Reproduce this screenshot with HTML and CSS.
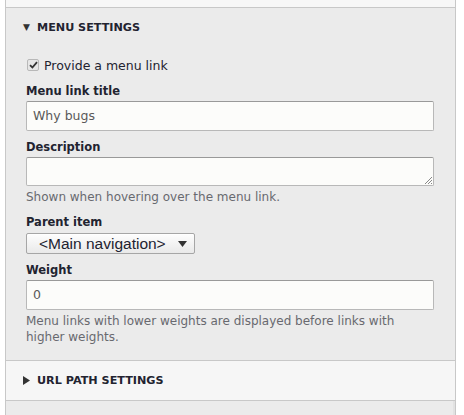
FILE: index.html
```html
<!DOCTYPE html>
<html>
<head>
<meta charset="utf-8">
<link rel="stylesheet" href="styles.css">
</head>
<body>
<div class="meta">
  <div class="topbar"></div>
  <div class="details open">
    <div class="summary"><span class="tri">&#9660;</span>MENU SETTINGS</div>
    <div class="body">
      <div class="check-row">
        <span class="checkbox"><svg width="9" height="8" viewBox="0 0 9 8"><path d="M1 4.2 L3.4 6.5 L8 1.2" fill="none" stroke="#333" stroke-width="1.8"/></svg></span>
        <span class="check-label">Provide a menu link</span>
      </div>
      <div class="item">
        <div class="label">Menu link title</div>
        <div class="input">Why bugs</div>
      </div>
      <div class="item">
        <div class="label">Description</div>
        <div class="input textarea"><svg class="grip" width="8" height="8" viewBox="0 0 8 8"><path d="M1 8 L8 1 M4 8 L8 4 M7 8 L8 7" stroke="#888" stroke-width="1"/></svg></div>
        <div class="help">Shown when hovering over the menu link.</div>
      </div>
      <div class="item after-help">
        <div class="label">Parent item</div>
        <div class="select"><span>&lt;Main navigation&gt;</span><svg class="arrow" width="9" height="6" viewBox="0 0 9 6"><path d="M0 0 H9 L4.5 6 Z" fill="#333"/></svg></div>
      </div>
      <div class="item">
        <div class="label">Weight</div>
        <div class="input">0</div>
        <div class="help">Menu links with lower weights are displayed before links with higher weights.</div>
      </div>
    </div>
  </div>
  <div class="details closed">
    <div class="summary"><span class="tri"><svg width="7" height="9" viewBox="0 0 7 9"><path d="M0 0 L7 4.5 L0 9 Z" fill="#333"/></svg></span>URL PATH SETTINGS</div>
  </div>
  <div class="rest"></div>
</div>
</body>
</html>
```
FILE: styles.css
```css
html, body {
  margin: 0;
  padding: 0;
  background: #fff;
}
body {
  font-family: "DejaVu Sans", "Lucida Grande", sans-serif;
  color: #222330;
  font-size: 13px;
}
.meta {
  margin-left: 5px;
  width: 449px;
  height: 415px;
  border-left: 1px solid #c8c8c8;
  border-right: 1px solid #c8c8c8;
  background: #ebebeb;
  box-shadow: inset -2px 0 0 #e2e2e2;
}
.topbar {
  height: 7px;
  background: #f7f7f7;
  border-bottom: 1px solid #c8c8c8;
}
.details {
  border-bottom: 1px solid #c8c8c8;
}
.details.open {
  background: #ebebeb;
  padding-bottom: 15px;
}
.details.closed {
  background: #f6f6f6;
}
.summary {
  font-weight: bold;
  font-size: 11.2px;
  text-transform: uppercase;
  color: #222330;
  display: flex;
  align-items: center;
  padding-left: 17px;
  height: 38px;
}
.closed .summary {
  height: 39px;
}
.tri {
  font-size: 9px;
  width: 14px;
  color: #333;
  display: flex;
  align-items: center;
}
.body {
  padding: 10px 21px 0 20px;
}
.check-row {
  display: flex;
  align-items: center;
  height: 18px;
  margin-left: 1px;
}
.checkbox {
  width: 10px;
  height: 10px;
  border: 1px solid #b8b8b8;
  border-radius: 2px;
  background: #e6e6e6;
  display: flex;
  align-items: center;
  justify-content: center;
  margin-right: 5px;
}
.check-label {
  font-size: 12.5px;
  color: #222330;
}
.item {
  margin-top: 7px;
}
.check-row + .item,
.item.after-help {
  margin-top: 8px;
}
.label {
  font-weight: bold;
  font-size: 11.5px;
  height: 18px;
  line-height: 18px;
  margin-bottom: 1px;
  color: #222330;
}
.input {
  box-sizing: border-box;
  height: 30px;
  border: 1px solid #b8b8b8;
  border-top-color: #999;
  border-radius: 2px;
  background: #fcfcfa;
  padding: 0 6px;
  line-height: 28px;
  font-size: 12.5px;
  color: #595959;
  position: relative;
}
.textarea {
  height: 29px;
}
.grip {
  position: absolute;
  right: 1px;
  bottom: 1px;
}
.help {
  font-size: 12px;
  color: #68696f;
  line-height: 16px;
  margin-top: 3px;
}
.select {
  display: inline-flex;
  align-items: center;
  box-sizing: border-box;
  width: 169px;
  height: 21px;
  margin-top: 1px;
  border: 1px solid #a6a6a6;
  border-radius: 2px;
  background: linear-gradient(#fefefe, #e9e9e9);
  padding-left: 12px;
  font-family: "Liberation Sans", Arial, sans-serif;
  font-size: 15.5px;
  color: #222330;
  box-shadow: inset 0 1px 0 #fff;
}
.select .arrow {
  margin-left: 12px;
  margin-top: 1px;
}
```
